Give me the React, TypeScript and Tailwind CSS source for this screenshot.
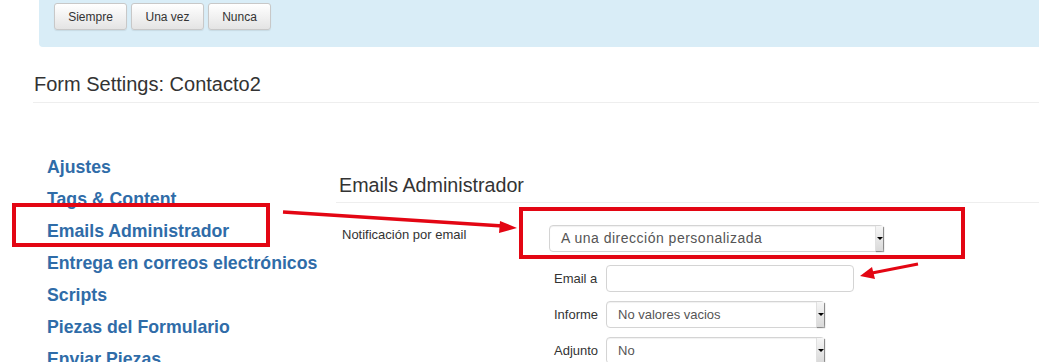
import React from "react";

const navItems = [
  "Ajustes",
  "Tags & Content",
  "Emails Administrador",
  "Entrega en correos electrónicos",
  "Scripts",
  "Piezas del Formulario",
  "Enviar Piezas",
];

function FakeSelect({ value, width, text = "text-[13px]" }: { value: string; width: string; text?: string }) {
  return (
    <div
      className={`${width} h-[27px] flex items-center justify-between rounded-[4px] border border-[#d4d4d4] bg-white shadow-[inset_0_1px_1px_rgba(0,0,0,0.06)]`}
    >
      <span className={`pl-[11px] ${text} text-[#555] whitespace-nowrap`}>{value}</span>
      <span className="h-[25px] w-[8px] flex items-center justify-center bg-gradient-to-b from-[#f6f6f6] to-[#d9d9d9] border-l border-[#e0e0e0] shadow-[1px_1px_1px_rgba(0,0,0,0.35)]">
        <span className="block w-0 h-0 border-l-[3px] border-r-[3px] border-t-[3px] border-l-transparent border-r-transparent border-t-black" />
      </span>
    </div>
  );
}

export default function App() {
  return (
    <div className="relative w-[1039px] h-[362px] overflow-hidden bg-white font-['Liberation_Sans',Arial,sans-serif] text-[#333]">
      {/* alert box with buttons */}
      <div className="ml-[39px] h-[47px] bg-[#d9edf7] rounded-bl-[4px] flex gap-[4px] pl-[15px] pt-[3px]">
        {[
          ["Siempre", "w-[73px]"],
          ["Una vez", "w-[73px]"],
          ["Nunca", "w-[63px]"],
        ].map(([label, w]) => (
          <button
            key={label}
            className={`${w} h-[27px] text-[12px] text-[#333] rounded-[3px] border border-[#c8c8c8] bg-gradient-to-b from-white to-[#e4e4e4] shadow-[0_1px_1px_rgba(0,0,0,0.08)]`}
          >
            {label}
          </button>
        ))}
      </div>

      {/* page title */}
      <div className="ml-[33px] mt-[26px] pb-[7px] border-b border-[#eee]">
        <h1 className="pl-[1px] text-[20px] leading-[22px] font-normal">Form Settings: Contacto2</h1>
      </div>

      <div className="flex">
        {/* left nav */}
        <ul className="w-[336px] shrink-0 pl-[47px] pt-[48px] text-[17.7px] leading-[32px] font-bold text-[#2f6ca8]">
          {navItems.map((item) => (
            <li key={item} className="whitespace-nowrap">{item}</li>
          ))}
        </ul>

        {/* right panel */}
        <div className="flex-1 pt-[71px]">
          <div className="pb-[6px] border-b border-[#eee]">
            <h2 className="pl-[3px] text-[19.7px] leading-[22px] font-normal">Emails Administrador</h2>
          </div>

          <div className="mt-[22px] flex items-start">
            <label className="w-[213px] shrink-0 pl-[6px] pt-[2px] text-[13px] leading-[15px]">Notificación por email</label>
            <FakeSelect value="A una dirección personalizada" width="w-[335px]" text="text-[14px] tracking-[0.5px]" />
          </div>

          <div className="mt-[13px] ml-[218px] flex flex-col gap-[9px]">
            <div className="flex items-center">
              <label className="w-[52px] text-[13px]">Email a</label>
              <div className="w-[248px] h-[27px] rounded-[4px] border border-[#d4d4d4] bg-white" />
            </div>
            <div className="flex items-center">
              <label className="w-[52px] text-[13px]">Informe</label>
              <FakeSelect value="No valores vacios" width="w-[219px]" />
            </div>
            <div className="flex items-center">
              <label className="w-[52px] text-[13px]">Adjunto</label>
              <FakeSelect value="No" width="w-[219px]" />
            </div>
          </div>
        </div>
      </div>

      {/* annotations */}
      <div className="absolute left-[12px] top-[203px] w-[258px] h-[44px] border-[4px] border-[#e30613]" />
      <div className="absolute left-[519px] top-[207px] w-[446px] h-[52px] border-[4px] border-[#e30613]" />
      <svg className="absolute left-0 top-0 pointer-events-none" width="1039" height="362">
        <line x1="283" y1="212" x2="503" y2="226" stroke="#e30613" strokeWidth="3.5" />
        <polygon points="517,228 500,221 499,233" fill="#e30613" />
        <line x1="918" y1="264" x2="872" y2="273" stroke="#e30613" strokeWidth="3" />
        <polygon points="860,276 872,267 875,279" fill="#e30613" />
      </svg>
    </div>
  );
}
